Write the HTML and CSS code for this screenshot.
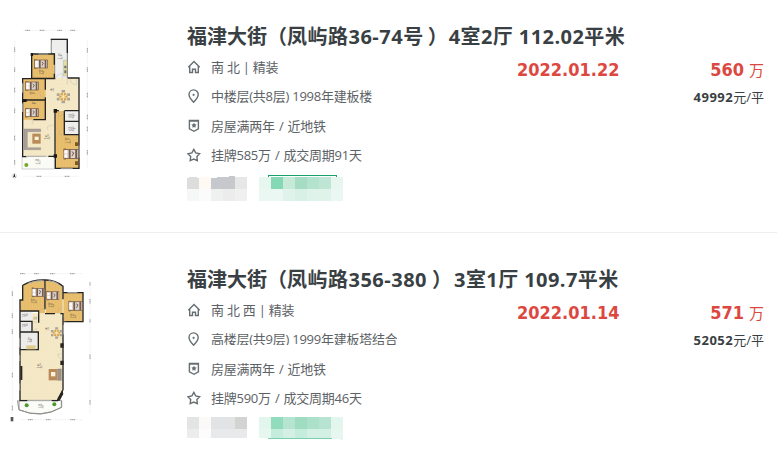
FILE: index.html
```html
<!DOCTYPE html>
<html lang="zh-CN">

<head>
    <meta charset="UTF-8">
    <meta name="viewport" content="width=device-width, initial-scale=1.0">
    <title>福津大街</title>
    <link rel="stylesheet" href="styles.css">
</head>

<body>
    <!-- shared symbols -->
    <svg class="defs" width="0" height="0">
        <defs>
            <pattern id="wood" width="9" height="30" patternUnits="userSpaceOnUse">
                <rect width="9" height="30" fill="#e9c071" />
                <path d="M0 0v30M4.5 0v30" stroke="#dcab57" stroke-width=".8" />
            </pattern>
            <pattern id="tile" width="10" height="10" patternUnits="userSpaceOnUse">
                <rect width="10" height="10" fill="#f4e8c7" />
                <path d="M0 0h10M0 0v10" stroke="#eadbb4" stroke-width=".8" />
            </pattern>
            <symbol id="bed" viewBox="0 0 40 32">
                <path d="M0 1h7v9H0zM0 22h7v9H0z" fill="#b78335" />
                <rect x="1" y="4" width="38" height="24" fill="#ded3ca" stroke="#6d5544" stroke-width="2" />
                <path d="M3 7h7v8H3zM3 17h7v8H3z" fill="#fff" />
                <path d="M14 4h5v24h-5zM31 4h5v24h-5z" fill="#745b4c" />
                <path d="M22 10l5 3-4 8" stroke="#4c3b32" stroke-width="2" fill="none" />
            </symbol>
            <symbol id="table" viewBox="0 0 40 40">
                <path d="M15 1h10v7H15zM15 32h10v7H15zM1 10h8v8H1zM31 10h8v8h-8zM1 23h8v8H1zM31 23h8v8h-8z" fill="#a8a59e" />
                <circle cx="20" cy="20" r="12" fill="#d6a64e" />
                <path d="M20 9v22M10 15l20 10M30 15L10 25" stroke="#fff0c6" stroke-width="2.5" />
            </symbol>
            <symbol id="house" viewBox="0 0 14 14">
                <path d="M1.3 7.2L7 1.6l5.7 5.6M2.7 6.2v6.3h2.8V9.3h3v3.2h2.8V6.2" />
            </symbol>
            <symbol id="pin" viewBox="0 0 14 14">
                <path d="M6.6 13.2C4 10.6 2 8.4 2 5.5a4.6 4.6 0 0 1 9.2 0c0 2.9-2 5.1-4.6 7.7z" />
                <circle cx="6.6" cy="5.8" r="1.1" class="dot" />
            </symbol>
            <symbol id="badge" viewBox="0 0 14 14">
                <path d="M2.4 1.5h9v8.3L7 12.3 2.4 9.8zM2 2h10" />
                <path d="M7 3.7l.9 1.6 1.7.3-1.2 1.3.2 1.9L7 8l-1.6.8.2-1.9-1.2-1.3 1.7-.3z" class="dot" />
            </symbol>
            <symbol id="star" viewBox="0 0 14 14">
                <path d="M6.8 1.4l1.9 3.5 4 .8-2.8 2.9.4 4.1-3.5-1.6-3.6 1.6.5-4.1L.9 5.7l4-.8z" />
            </symbol>
        </defs>
    </svg>

    <main>
        <section class="item">
            <svg class="plan" viewBox="0 0 330 510">
                <path class="ruler" d="M70 31h166M44 60v385M262 60v385M70 469h166" />
                <path class="ticks" d="M76 31h14M119 31h14M172 31h14M211 31h14M110 469h14M194 469h14M44 82v14M44 142v14M44 203v14M44 265v14M44 347v14M44 420v14M262 84v14M262 142v14M262 218v14M262 284v14M262 320v14M262 390v14" />
                <path d="M154 58h48v118h-38V101h-10z" fill="#eeeeec" stroke="#777" stroke-width="3" />
                <path d="M70 176h67v-2h100v97H164v138H70z" fill="url(#tile)" />
                <path d="M96 103h67v72H96zM70 176h67v64H70zM70 240h67v59H70zM166 272h27v72h44v102h-71z" fill="url(#wood)" />
                <path d="M194 272h42v30h-42zM194 306h42v36h-42z" fill="#eee" />
                <path d="M66 409h97v38H66z" fill="#fbfbf5" stroke="#bbb" stroke-width="2" />
                <path class="wall" d="M95 175v-73h68v32M163 161v14H95M68 174v236h12M145 409h21v36h71V174h-34M68 176h68v33M136 232v8H68M136 240v59h-36M138 176h28M165 272v137M165 272h12M193 272v72h43M193 304h43M193 272h43M202 57v42M152 58h52" />
                <path class="thin" d="M187 176v-15q-15 0-23 15M202 174v20M211 176q0 18 18 18v-18M119 215q0 18 18 18M145 330q-12-12 15-15M176 272v18q15-3 16-18M97 300v13M192 344h-14v-16" />
                <path class="window" d="M115 102h30M68 190v28M68 250v26M78 409h60M182 446h36M154 68v28M237 376v36" />
                <path d="M161 267h10v11h-10zM161 403h10v10h-10zM92 99h7v9h-7zM68 238h12v8H68z" fill="#191919" />
                <use href="#bed" x="100" y="116" width="46" height="32" />
                <use href="#bed" x="72" y="182" width="48" height="32" />
                <use href="#bed" x="72" y="262" width="48" height="32" />
                <use href="#bed" x="190" y="381" width="46" height="42" />
                <use href="#table" x="169" y="209" width="42" height="42" />
                <path d="M190 121h11v47h-11z" fill="#e6dd9f" stroke="#999" />
                <path d="M193 137h6v8h-6zM193 151h6v9h-6z" fill="#6e705d" />
                <path d="M72 327h50v8H82v48h40v6H72z" fill="#aaa19a" stroke="#887d75" />
                <path d="M97 341h25v30H97z" fill="#b98b59" />
                <path d="M104 350h12v10h-12z" fill="#fff4df" />
                <path d="M225 367h11v11h-11zM225 424h11v11h-11z" fill="#7c5825" />
                <circle cx="79" cy="435" r="6" fill="#73a82c" />
                <g class="label">
                    <text x="125" y="156">卧室C</text><text x="125" y="163">8.2㎡</text>
                    <text x="97" y="222">卧室B</text><text x="101" y="252">书房</text>
                    <text x="157" y="214">餐厅</text><text x="180" y="109">厨房</text>
                    <text x="180" y="116">6.3㎡</text><text x="215" y="288">卫生间A</text>
                    <text x="215" y="295">3.4㎡</text><text x="215" y="326">卫生间B</text>
                    <text x="215" y="334">3.7㎡</text><text x="141" y="350">客厅</text>
                    <text x="141" y="358">30.0㎡</text><text x="203" y="360">卧室A</text>
                    <text x="203" y="368">17.3㎡</text><text x="114" y="424">阳台A</text><text x="114" y="432">3.6㎡</text>
                </g>
                <circle cx="43" cy="468" r="7" fill="none" stroke="#aaa" />
                <path d="M43 460l4 13-4-3-4 3z" fill="#222" />
            </svg>
            <div class="content">
                <h2><span>福津大街（</span><span class="road">凤屿路36-74号</span><span class="close">）</span><span class="size">4室2厅 112.02平米</span></h2>
                <div class="info">
                    <ul class="facts">
                        <li><svg class="icon"><use href="#house" /></svg><span class="fact">南 北 | 精装</span></li>
                        <li><svg class="icon"><use href="#pin" /></svg><span class="fact">中楼层(共8层) 1998年建板楼</span></li>
                        <li><svg class="icon"><use href="#badge" /></svg><span class="fact wide">房屋满两年 / 近地铁</span></li>
                        <li><svg class="icon"><use href="#star" /></svg><span class="fact wide">挂牌585万 / 成交周期91天</span></li>
                    </ul>
                    <div class="date">2022.01.22</div>
                    <div class="price">
                        <p class="total"><b>560</b> 万</p>
                        <p class="unit"><b>49992</b>元/平</p>
                    </div>
                </div>
                <svg class="mosaic" viewBox="0 0 156 26" shape-rendering="crispEdges">
                    <path d="M81 2q0-1.5 1-1.5h67q1 0 1 1.5" fill="none" stroke="#16a06b" />
                    <path d="M0 3l4-1h4l4 1v11H0z" fill="#dcdddc" /><path d="M12 2h12v12H12z" fill="#fff9f4" />
                    <path d="M24 3l12-1v12H24z" fill="#c5c9cd" /><path d="M36 2l12-1v13H36z" fill="#c7c8cb" />
                    <path d="M48 2h12v12H48z" fill="#e7e7e8" />
                    <path d="M0 14h12v12H0z" fill="#f6f8f7" /><path d="M12 14h12v12H12z" fill="#fbfbfb" />
                    <path d="M24 14h12v12H24z" fill="#eff1f0" /><path d="M36 14h12v12H36z" fill="#ececec" />
                    <path d="M48 14h12v12H48z" fill="#f0f0f0" />
                    <path d="M72 2h12v12H72zM144 2h12v12h-12z" fill="#e7f7f0" />
                    <path d="M84 2h12v12H84z" fill="#84d8b4" /><path d="M96 2h12v12H96z" fill="#c7e9d8" />
                    <path d="M108 2h12v12h-12z" fill="#a6dcc3" /><path d="M120 2h12v12h-12z" fill="#b3e2cd" />
                    <path d="M132 2h12v12h-12z" fill="#bfe6d4" />
                    <path d="M72 14h84v12H72z" fill="#eaf7f2" />
                    <path d="M96 14h12v12H96zM120 14h24v12h-24z" fill="#e0f3ea" /><path d="M108 14h12v12h-12z" fill="#d8f0e5" />
                </svg>
            </div>
        </section>

        <section class="item second">
            <svg class="plan" viewBox="0 0 330 510">
                <path class="ruler" d="M60 41h188M37 80v382M270 66v395M60 479h188" />
                <path class="ticks" d="M60 41h14M102 41h14M150 41h14M210 41h14M84 479h14M138 479h14M211 479h14M37 94v14M37 160v14M37 208v14M37 338v14M37 437v14M270 67v10M270 117v14M270 178v10M270 283v14M270 420v14" />
                <path d="M60 160h128v228l-15 34H59z" fill="url(#tile)" />
                <path d="M68 78q34-18 67-16v98h-20v-6H61v-34h7zM137 62q26 0 51 18v80h-51zM190 99h58v86h-58z" fill="url(#wood)" />
                <path d="M59 154h38v28H59zM59 185h38v31H59zM59 217h54v52H59z" fill="#ececec" />
                <path d="M57 421h127v21q-59 34-127 8z" fill="#fbfcf7" stroke="#999" stroke-width="3" />
                <path class="wall" d="M68 76v44h-8v302h22M155 422h18l16-33V160M68 76q33-18 67-16 30-1 54 19v39M190 98h59v87h-60M135 62v86M135 161h30M181 161h8v91M58 153h58v35M58 184h38v30M58 216h57v53H58M189 297v30" />
                <path class="thin" d="M135 144q-15 0-19 17M172 161q0-14 16-18M189 282h-16q2 15 16 15M98 186h15M96 214q8-8 17-8M189 185h8q0-12-8-18" />
                <path class="window" d="M84 70q23-9 43-8M146 62q17 1 30 10M202 98h30M59 234v28M59 285v18M59 370v22M84 422h66M190 195v28" />
                <path d="M53 421q0 9 4 28 65 30 128-7v-20" fill="none" stroke="#8c8f8c" stroke-width="3" />
                <path d="M181 250h10v13h-10zM181 302h10v13h-10zM61 318h6v42h-6zM173 414l14-25 3 13-11 20h-9z" fill="#292622" />
                <use href="#bed" x="95" y="78" width="40" height="38" />
                <use href="#bed" x="139" y="88" width="39" height="38" />
                <use href="#bed" x="205" y="119" width="43" height="38" />
                <use href="#table" x="152" y="201" width="36" height="36" />
                <path d="M146 327h26v34h-26z" fill="#b78a57" />
                <path d="M153 336h13v13h-13z" fill="#fff1de" />
                <path d="M173 327h11v34h-11z" fill="#9e948b" stroke="#736b66" />
                <path d="M79 256h28v12H79z" fill="#dfcc8d" />
                <circle cx="80" cy="436" r="6" fill="#4d9930" />
                <circle cx="163" cy="433" r="6" fill="#4d9930" />
                <g class="label">
                    <text x="101" y="123">卧室A</text><text x="101" y="130">12.5㎡</text>
                    <text x="153" y="134">卧室B</text><text x="153" y="141">10.3㎡</text>
                    <text x="219" y="167">卧室C</text><text x="219" y="174">10.1㎡</text>
                    <text x="74" y="168">卫生间</text><text x="74" y="199">卫生间</text>
                    <text x="105" y="176">过道</text><text x="142" y="210">餐厅</text>
                    <text x="89" y="239">厨房</text><text x="89" y="247">7.2㎡</text>
                    <text x="118" y="317">客厅</text><text x="118" y="325">40.0㎡</text>
                    <text x="123" y="438">阳台A</text><text x="123" y="445">5.6㎡</text>
                </g>
                <path d="M32 471h8v13h-8z" fill="#555" />
            </svg>
            <div class="content">
                <h2><span>福津大街（</span><span class="road">凤屿路356-380</span><span class="close">）</span><span class="size">3室1厅 109.7平米</span></h2>
                <div class="info">
                    <ul class="facts">
                        <li><svg class="icon"><use href="#house" /></svg><span class="fact">南 北 西 | 精装</span></li>
                        <li><svg class="icon"><use href="#pin" /></svg><span class="fact cut">高楼层(共9层) 1999年建板塔结合</span></li>
                        <li><svg class="icon"><use href="#badge" /></svg><span class="fact wide">房屋满两年 / 近地铁</span></li>
                        <li><svg class="icon"><use href="#star" /></svg><span class="fact wide">挂牌590万 / 成交周期46天</span></li>
                    </ul>
                    <div class="date">2022.01.14</div>
                    <div class="price">
                        <p class="total"><b>571</b> 万</p>
                        <p class="unit"><b>52052</b>元/平</p>
                    </div>
                </div>
                <svg class="mosaic" viewBox="0 0 156 26" shape-rendering="crispEdges">
                    <path d="M0 2h12v12H0z" fill="#e3e5e4" /><path d="M12 2h12v12H12z" fill="#fcfaf8" />
                    <path d="M24 2h24v12H24z" fill="#e2e3e5" /><path d="M48 2h12v12H48z" fill="#d3d4d2" />
                    <path d="M0 14h12v9H0z" fill="#ebeded" /><path d="M12 14h12v9H12z" fill="#fcfcfc" />
                    <path d="M24 14h36v9H24z" fill="#e8e9ea" />
                    <path d="M72 2h12v12H72zM144 2h12v12h-12z" fill="#e3f6ee" />
                    <path d="M84 2h12v12H84z" fill="#91dcbc" /><path d="M96 2h12v12H96z" fill="#b5e5d0" />
                    <path d="M108 2h12v12h-12z" fill="#9fdcc1" /><path d="M120 2h12v12h-12z" fill="#abe0c9" />
                    <path d="M132 2h12v12h-12z" fill="#b6e4d0" />
                    <path d="M72 14h12v9H72zM144 14h12v11l-12-2z" fill="#e5f7ef" />
                    <path d="M84 14h60v9H84z" fill="#d4f0e4" /><path d="M84 14h12v9H84zM108 14h12v9h-12z" fill="#c4eddb" />
                    <path d="M81 23.5h64" stroke="#78d0ae" />
                </svg>
            </div>
        </section>
    </main>
</body>

</html>
```

FILE: styles.css
```css
body {
    background-color: #fff;
    color: #394043;
    font-family: "Open Sans", "Noto Sans CJK SC", sans-serif;
    margin: 0;
    overflow: hidden;
}

.defs {
    display: block;
}

.item {
    border-bottom: 1px solid #eee;
    box-sizing: border-box;
    display: flex;
    height: 233px;
    padding: 20px 13px 0 0;
}

.item.second {
    border-bottom: none;
    height: 228px;
    padding-top: 27px;
}

.plan {
    flex: none;
    height: 170px;
    width: 110px;
}

.content {
    flex: 1;
    margin-left: 77px;
    padding-top: 2px;
}

.second .content {
    padding-top: 5px;
}

h2 {
    display: flex;
    font-size: 20px;
    font-weight: bold;
    height: 28px;
    line-height: 29px;
    margin: 0;
    white-space: nowrap;
}

.road {
    letter-spacing: .5px;
}

.close {
    margin-left: 4px;
    margin-right: 1px;
}

.second .close {
    margin-left: 5px;
    margin-right: 2px;
}

.size {
    letter-spacing: .42px;
}

.info {
    display: flex;
    height: 123px;
    padding-top: 2px;
}

.second .info {
    height: 120px;
}

.facts {
    display: flex;
    flex: none;
    flex-direction: column;
    gap: 9.4px;
    list-style: none;
    margin: 0;
    padding: 5px 0 0;
    width: 330px;
}

.facts li {
    align-items: center;
    display: flex;
    gap: 10px;
    height: 20px;
}

.icon {
    fill: none;
    flex: none;
    height: 14px;
    stroke: #666e72;
    stroke-width: 1.4;
    width: 14px;
}

.dot {
    fill: #666e72;
    stroke: none;
}

.fact {
    color: #5c6266;
    font-size: 13px;
    letter-spacing: -.25px;
    line-height: 20px;
    white-space: nowrap;
}

.wide {
    word-spacing: 1px;
}

.cut {
    height: 16px;
    line-height: 20px;
    margin-top: -4px;
    overflow: hidden;
}

.date {
    color: #dc483f;
    font-family: "DejaVu Sans Condensed", "DejaVu Sans", sans-serif;
    font-size: 18px;
    font-stretch: condensed;
    font-weight: bold;
    line-height: 24px;
    padding-top: 6px;
}

.price {
    margin-left: auto;
    text-align: right;
}

.price p {
    margin: 0;
    white-space: nowrap;
}

.total {
    color: #dc483f;
    font-size: 15px;
    height: 24px;
    line-height: 24px;
    padding-top: 6px;
}

.total b {
    font-family: "DejaVu Sans Condensed", "DejaVu Sans", sans-serif;
    font-size: 18px;
    font-stretch: condensed;
    margin-right: 1px;
}

.unit {
    font-size: 13px;
    line-height: 20px;
    padding-top: 5px;
}

.unit b {
    letter-spacing: .5px;
}

.mosaic {
    display: block;
    height: 26px;
    width: 156px;
}

.ruler {
    fill: none;
    stroke: #ccc;
    stroke-dasharray: 3 2;
    stroke-width: 1;
}

.ticks {
    fill: none;
    stroke: #999;
    stroke-dasharray: 4 1;
    stroke-width: 3;
}

.wall {
    fill: none;
    stroke: #242321;
    stroke-width: 4;
}

.thin {
    fill: none;
    stroke: #aaa;
    stroke-width: 1;
}

.window {
    fill: none;
    stroke: #a9acaa;
    stroke-width: 3;
}

.label {
    fill: #514b42;
    font-size: 6px;
    text-anchor: middle;
}
```
